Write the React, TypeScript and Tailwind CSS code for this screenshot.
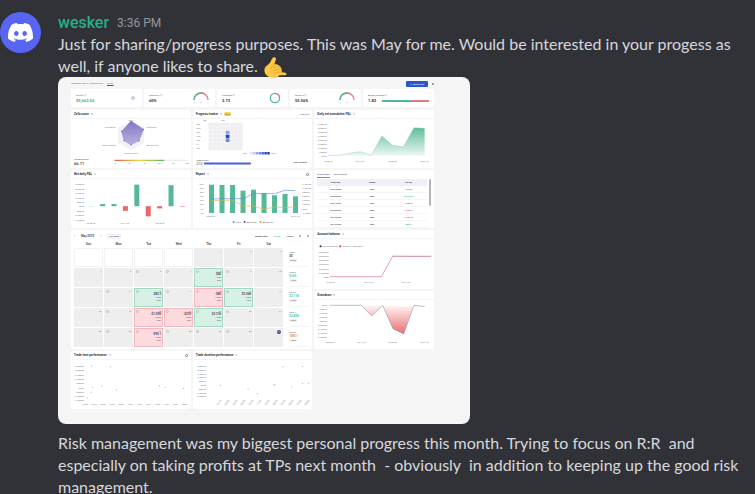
import type { ReactNode } from 'react';
import { SiDiscord } from 'react-icons/si';

type Point = [number, number];

const toPoints = (points: Point[]) => points.map((p) => p.join(',')).join(' ');

const Card = ({
  title,
  extra,
  action,
  children,
}: {
  title: string;
  extra?: ReactNode;
  action?: ReactNode;
  children: ReactNode;
}) => (
  <section className="flex min-w-0 flex-col rounded-[2px] bg-white">
    <header className="flex h-[9px] items-center gap-[2px] border-b border-[#f4f4f6] px-[3px]">
      <h3 className="text-[3px] leading-none font-bold text-[#33333d]">{title}</h3>
      <span className="size-[2px] rounded-full bg-[#cfcfd5]"></span>
      {extra}
      <div className="ml-auto flex items-center">{action}</div>
    </header>
    {children}
  </section>
);

const Chart = ({ children }: { children: ReactNode }) => (
  <svg viewBox="0 0 119 49" className="block h-[49px] w-full" fontSize="2" fill="#77777f">
    {children}
  </svg>
);

const YLabels = ({ labels, x, y, step }: { labels: string[]; x: number; y: number; step: number }) => (
  <g textAnchor="end">
    {labels.map((label, i) => (
      <text key={i} x={x} y={y + i * step + 1}>
        {label}
      </text>
    ))}
  </g>
);

const XLabels = ({ labels, xs, y }: { labels: string[]; xs: number[]; y: number }) => (
  <g textAnchor="middle">
    {labels.map((label, i) => (
      <text key={i} x={xs[i]} y={y + 1}>
        {label}
      </text>
    ))}
  </g>
);

const Gauge = ({ split }: { split: number }) => (
  <svg viewBox="0 0 18 14" className="h-[14px] w-[18px]" fill="none" strokeWidth="1.3">
    <path d="M2 9a7 7 0 0 1 14 0" pathLength="100" stroke="#e8777d" />
    <path d="M2 9a7 7 0 0 1 14 0" pathLength="100" strokeDasharray={`${split} 100`} stroke="#4dba92" />
    <g fontSize="2" textAnchor="middle">
      <text x="2" y="12" fill="#4dba92">6</text>
      <text x="9" y="12" fill="#7777aa">0</text>
      <text x="16" y="12" fill="#e8777d">4</text>
    </g>
  </svg>
);

const stats = [
  {
    label: 'Net P&L',
    value: '$5,662.04',
    color: 'text-[#36b184]',
    visual: <span className="mr-[2px] size-[4px] rounded-full border border-[#c4c0f2] bg-[#dddbfa]"></span>,
  },
  { label: 'Trade win %', value: '60%', color: 'text-[#33333d]', visual: <Gauge split={62} /> },
  {
    label: 'Profit factor',
    value: '2.73',
    color: 'text-[#33333d]',
    visual: (
      <svg viewBox="0 0 12 12" className="mr-[2px] size-[12px]" fill="none" strokeWidth="1.3">
        <circle cx="6" cy="6" r="4.6" stroke="#4dba92" />
        <path d="M6 1.4a4.6 4.6 0 0 1 4.5 3.8" stroke="#e8777d" />
      </svg>
    ),
  },
  { label: 'Day win %', value: '55.56%', color: 'text-[#33333d]', visual: <Gauge split={56} /> },
];

const dayLabels = ['Sun', 'Mon', 'Tue', 'Wed', 'Thu', 'Fri', 'Sat'];
const moneyLabels = ['$2,500.00', '$2,000.00', '$1,500.00', '$1,000.00', '$500.00', '$0.00', '-$500.00', '-$1,000.00', '-$1,500.00'];

const ScoreChart = () => (
  <Chart>
    <defs>
      <linearGradient id="radar" x1="0" y1="0" x2="0" y2="1">
        <stop offset="0" stopColor="#8375c4" />
        <stop offset="1" stopColor="#b9b2df" />
      </linearGradient>
      <linearGradient id="score">
        <stop offset="0" stopColor="#e9604e" />
        <stop offset="0.5" stopColor="#f0cf48" />
        <stop offset="1" stopColor="#52b869" />
      </linearGradient>
    </defs>
    <polygon points="59.7,2 72.7,9 72.7,24 59.7,31 46.7,24 46.7,9" fill="#f1f1f6" />
    <polygon points="59.7,2 72.3,10.3 67.7,21.7 59.7,25.7 52.7,21.7 50.3,12.3" fill="url(#radar)" stroke="#7767bd" strokeWidth="0.3" />
    {[[59.7, 2], [72.3, 10.3], [67.7, 21.7], [59.7, 25.7], [52.7, 21.7], [50.3, 12.3]].map(([x, y], i) => (
      <circle key={i} cx={x} cy={y} r="0.6" fill="#6253a8" />
    ))}
    <g textAnchor="middle">
      <text x="59.7" y="1.6">Win %</text>
      <text x="80" y="9.3">Profit factor</text>
      <text x="81" y="27.3">Avg win/loss</text>
      <text x="59.7" y="35.3">Recovery factor</text>
      <text x="37.7" y="27.3">Max drawdown</text>
      <text x="39" y="9.3">Consistency</text>
    </g>
    <text x="2.7" y="41" fill="#33333d">Your Zella Score</text>
    <text x="2.7" y="46" fontSize="4" fontWeight="600" fill="#44444e">66.11</text>
    <rect x="43.3" y="40.8" width="73" height="1.2" fill="#ececf0" />
    <rect x="43.3" y="40.8" width="49.5" height="1.2" fill="url(#score)" />
    <XLabels labels={['0', '20', '40', '60', '80', '100']} xs={[43.7, 58, 73, 87.5, 102, 115.5]} y={44} />
  </Chart>
);

const heat: Record<number, string> = { 2: '#8ea5ea', 3: '#2349c9', 4: '#6d8be3' };
const legendBlues = ['#dfe6fb', '#b9c8f5', '#8ea5ea', '#6d8be3', '#4468d8', '#2349c9', '#1c3ca8'];

const ProgressChart = () => (
  <Chart>
    <XLabels labels={['Apr', 'May']} xs={[11.7, 29.7]} y={1} />
    <rect x="15" y="3.6" width="34.6" height="27.7" rx="1" fill="#f7f7f9" />
    {dayLabels.map((day, row) => (
      <g key={day}>
        <text x="3.2" y={6.2 + row * 4}>{day}</text>
        {Array.from({ length: 8 }, (_, col) => (
          <rect
            key={col}
            x={15.4 + col * 4.25}
            y={4 + row * 3.9}
            width="3.8"
            height="3.5"
            rx="0.6"
            fill={col === 4 && heat[row] ? heat[row] : '#efeff2'}
          />
        ))}
      </g>
    ))}
    <text x="49.5" y="35">Less</text>
    {legendBlues.map((blue, i) => (
      <rect key={blue} x={56.5 + i * 2.9} y="33" width="2.5" height="2.5" rx="0.5" fill={blue} />
    ))}
    <text x="78" y="35">More</text>
    <text x="3" y="42" fill="#33333d">Today's score</text>
    <text x="3" y="46" fontSize="4" fill="#44444e">2/3</text>
    <rect x="10.5" y="43.6" width="47.2" height="2" rx="1" fill="#4463d4" />
    <text x="107" y="44" textAnchor="middle" fontWeight="600" fill="#33333d">Daily checklist</text>
  </Chart>
);

const cumulative: Point[] = [[13.6, 36.3], [24.6, 36.3], [34.6, 34.3], [45.6, 32.7], [57, 36.3], [67.6, 17], [78.3, 26.3], [89, 28], [99.6, 8.7], [110.3, 9.3]];

const CumulativeChart = () => (
  <Chart>
    <defs>
      <linearGradient id="profit" x1="0" y1="0" x2="0" y2="1">
        <stop offset="0" stopColor="#5fbd9a" />
        <stop offset="1" stopColor="#eaf7f2" />
      </linearGradient>
    </defs>
    <YLabels labels={['$7,000.00', '$6,000.00', '$5,000.00', '$4,000.00', '$3,000.00', '$2,000.00', '$1,000.00', '$500.00', '$0.00']} x={12.3} y={5} step={4} />
    <polygon points={`${toPoints(cumulative)} 110.3,36.5 13.6,36.5`} fill="url(#profit)" />
    <polyline points={toPoints(cumulative)} fill="none" stroke="#8cc5af" strokeWidth="0.4" />
    <XLabels labels={['05/08/25', '05/14/25', '05/20/25', '05/27/25']} xs={[14, 45.7, 78.3, 110.3]} y={41.7} />
  </Chart>
);

const dailyBars = [0.2, 2.2, 2.2, -4.6, 21.6, -10.2, -2.2, 21, -0.5];

const DailyChart = () => (
  <Chart>
    <YLabels labels={moneyLabels} x={12.7} y={5.3} step={4.4} />
    {dailyBars.map((value, i) => (
      <rect
        key={i}
        x={17.4 + i * 11.4}
        y={value > 0 ? 27.2 - value : 27.2}
        width="5"
        height={Math.abs(value)}
        fill={value > 0 ? '#53ba95' : '#e5696b'}
      />
    ))}
    <XLabels labels={['05/08/25', '05/14/25', '05/20/25']} xs={[19.7, 53.7, 88.7]} y={44} />
  </Chart>
);

const reportTops = [5.7, 6, 6, 11.7, 10.7, 14, 16.3, 15, 17.3];
const avgWin: Point[] = [[18.4, 20], [28.3, 19.7], [39, 19.7], [50, 19.7], [60, 14.7], [70.7, 14.7], [81, 14.7], [91.7, 11.3], [102, 11.7]];
const avgLoss: Point[] = [[18.4, 21.7], [28.3, 21.3], [39, 21.3], [50, 27], [60, 27], [70.7, 30.3], [81, 28], [91.7, 28.7], [102, 27.7]];

const ReportChart = () => (
  <Chart>
    <YLabels labels={['100%', '90%', '80%', '70%', '60%', '50%', '40%', '0%']} x={10.4} y={4.7} step={4.15} />
    {reportTops.map((top, i) => (
      <rect key={i} x={15.7 + i * 10.5} y={top} width="5" height={34 - top} fill="#53ba95" />
    ))}
    <polyline points={toPoints(avgWin)} fill="none" stroke="#5685d6" strokeWidth="0.6" />
    <polyline points={toPoints(avgLoss)} fill="none" stroke="#e5ae4b" strokeWidth="0.6" />
    {['$1,200.00', '$1,000.00', '$800.00', '$600.00', '$400.00', '$200.00', '$0.00', '-$1,000.0'].map((label, i) => (
      <text key={label} x="109" y={5.7 + i * 4.15}>{label}</text>
    ))}
    <XLabels labels={['05/08/25', '05/27/25']} xs={[17.4, 102]} y={37.3} />
    <g fill="#44444e">
      <circle cx="40.3" cy="43" r="1" fill="#3fb28a" />
      <text x="42.3" y="44">Win %</text>
      <circle cx="51.3" cy="43" r="1" fill="#3856c5" />
      <text x="53.3" y="44">Avg win ($)</text>
      <circle cx="67.3" cy="43" r="1" fill="#e0a02e" />
      <text x="69.3" y="44">Avg loss ($)</text>
    </g>
  </Chart>
);

const BalanceChart = () => (
  <Chart>
    <rect x="5.3" y="6.3" width="2" height="2" rx="0.6" fill="#3c3897" />
    <text x="8.5" y="8">Account Balance</text>
    <rect x="25" y="6.3" width="2" height="2" rx="0.6" fill="#dc3c6b" />
    <text x="28.2" y="8">Deposits / Withdrawals</text>
    <YLabels labels={['$60,000.00', '$50,000.00', '$40,000.00', '$30,000.00', '$20,000.00', '$10,000.00', '$0.00']} x={14.3} y={13.3} step={4.05} />
    <polyline points="15.3,37.7 67,37.7 78.3,17.3 117,17.7" fill="none" stroke="#d97990" strokeWidth="0.7" />
    <polyline points="78.3,17.1 117,17" fill="none" stroke="#8a6f98" strokeWidth="0.3" />
    <XLabels labels={['04/30/25', '05/14/25', '05/21/25']} xs={[16, 54, 91.7]} y={42.7} />
  </Chart>
);

const drawdown: Point[] = [[15.6, 5.3], [47, 5.3], [57.3, 15.8], [68.3, 5.3], [78.6, 28.7], [89.3, 34], [99.6, 5.3], [110.3, 6.5]];

const DrawdownChart = () => (
  <Chart>
    <defs>
      <linearGradient id="loss" gradientUnits="userSpaceOnUse" x1="0" y1="6" x2="0" y2="34">
        <stop offset="0" stopColor="#fef1f1" />
        <stop offset="1" stopColor="#e96f6f" />
      </linearGradient>
    </defs>
    <YLabels labels={['$0.00', '-$200.00', '-$400.00', '-$600.00', '-$800.00', '-$1,000.00', '-$1,200.00', '-$1,400.00', '-$1,800.00']} x={12.5} y={5.3} step={4} />
    <polygon points={toPoints(drawdown)} fill="url(#loss)" />
    <polyline points={toPoints(drawdown)} fill="none" stroke="#9a8fae" strokeWidth="0.6" />
    <XLabels labels={['05/08/25', '05/14/25', '05/20/25', '05/27/25']} xs={[15.6, 47, 78.3, 110.3]} y={42.3} />
  </Chart>
);

const timeDots: Point[] = [[20.3, 6], [39, 6.7], [21.3, 27.3], [30.3, 26], [20, 32.3], [16.3, 37.7], [45.3, 30], [88, 25.7], [94, 27.3], [112, 28.3]];
const durationDots: Point[] = [[27.3, 25.3], [54.7, 29], [64, 33.7], [80.5, 24.7], [81.7, 24.7], [89.7, 6.7], [98.3, 26.7], [109, 6.3], [109, 23.3], [115.3, 23.3]];

const Dots = ({ points }: { points: Point[] }) => (
  <>
    {points.map(([x, y], i) => (
      <circle key={i} cx={x} cy={y} r="0.5" fill={i % 5 === 3 ? '#53ba95' : '#92929a'} />
    ))}
  </>
);

const TimeChart = () => (
  <Chart>
    <YLabels labels={moneyLabels} x={12.5} y={6} step={4.3} />
    <Dots points={timeDots} />
    <XLabels
      labels={['02:00', '03:30', '05:00', '07:00', '08:30', '10:00', '12:00', '13:30', '15:00', '17:00', '18:30', '20:00']}
      xs={[13.7, 22.7, 31.7, 40.7, 49.7, 58.7, 67.7, 76.7, 85.7, 94.7, 103.7, 112.7]}
      y={44.3}
    />
  </Chart>
);

const DurationChart = () => (
  <Chart>
    <YLabels labels={moneyLabels} x={12.7} y={6} step={3.8} />
    <Dots points={durationDots} />
    {['1m:14s', '2m:05s', '3m:20s', '5m:00s', '7m:30s', '11m:0s', '16m:0s', '25m:0s', '37m:0s', '55m:0s', '1h:22m', '2h:00m'].map((label, i) => (
      <text key={label} textAnchor="middle" transform={`translate(${26 + i * 8} 43) rotate(-50)`}>
        {label}
      </text>
    ))}
  </Chart>
);

const trades = [
  { date: '05/27/2025', pnl: '-$90.00', win: false },
  { date: '05/22/2025', pnl: '$2,210.39', win: true },
  { date: '05/21/2025', pnl: '-$208.89', win: false },
  { date: '05/20/2025', pnl: '-$1,089.51', win: false },
  { date: '05/15/2025', pnl: '$1,056.35', win: true },
  { date: '05/13/2025', pnl: '$80.21', win: true },
];

const RecentTrades = () => (
  <section className="flex min-w-0 flex-col overflow-hidden rounded-[2px] bg-white px-[3px]">
    <nav className="flex h-[11px] items-center gap-[4px] text-[2px] leading-[6px] font-medium">
      <a href="#recent" className="border-b border-[#8c85c4] text-[#5148a8]">Recent trades</a>
      <a href="#open" className="text-[#55555f]">Open positions</a>
    </nav>
    <div className="flex gap-[2px]">
      <table className="w-full table-fixed text-center text-[2px] leading-[6px] font-medium text-[#33333d]">
        <thead>
          <tr className="h-[7px] bg-[#f0f0f7] text-[2px] font-bold">
            <th>Close date</th>
            <th>Symbol</th>
            <th>Net P&L</th>
          </tr>
        </thead>
        <tbody>
          {trades.map((trade) => (
            <tr key={trade.date} className="h-[7px] border-b border-[#f6f6f8]">
              <td>{trade.date}</td>
              <td>MNQ</td>
              <td className={trade.win ? 'text-[#18a06f]' : 'text-[#d93c47]'}>{trade.pnl}</td>
            </tr>
          ))}
        </tbody>
      </table>
      <div className="h-[27px] w-[2px] shrink-0 rounded-full bg-[#b4b4b8]"></div>
    </div>
  </section>
);

const results: Record<number, { pnl: string; win: boolean }> = {
  8: { pnl: '$80', win: true },
  13: { pnl: '$80.2', win: true },
  15: { pnl: '-$80', win: false },
  16: { pnl: '$2.06K', win: true },
  20: { pnl: '-$1.09K', win: false },
  21: { pnl: '-$209', win: false },
  22: { pnl: '$2.21K', win: true },
  27: { pnl: '-$90.1', win: false },
};

const weeks = [
  { pnl: '$0', color: 'text-[#33333d]' },
  { pnl: '$160', color: 'text-[#36b184]' },
  { pnl: '$2.11K', color: 'text-[#36b184]' },
  { pnl: '$2.83K', color: 'text-[#36b184]' },
  { pnl: '-$90.1', color: 'text-[#e0565f]' },
];

const dayStyle = (day: number) => {
  if (day < 1) return 'border-[#f3f3f5] bg-white';
  const result = results[day];
  if (!result) return 'border-[#eeeeee] bg-[#eeeeee]';
  return result.win ? 'border-[#a3d9c3] bg-[#d8f1e6]' : 'border-[#f2b8bd] bg-[#fcdadd]';
};

const daysWithNote = [6, 7, 8, 9, 12, 13, 14, 15, 16, 19, 20, 21, 22, 23, 26, 27, 28, 29, 30];

const CalendarCard = () => (
  <section className="col-span-2 row-span-2 flex min-w-0 flex-col rounded-[2px] bg-white px-[3px] text-[2px] leading-[3px] text-[#55555f]">
    <header className="flex h-[12px] items-center gap-[6px] text-[3px] font-medium text-[#33333d]">
      <button type="button">‹</button>
      <span>May 2025</span>
      <button type="button">›</button>
      <button type="button" className="rounded-[1px] border border-[#eeeef1] px-px text-[2px]">This month</button>
      <span className="ml-auto text-[2px] font-bold">Monthly stats:</span>
      <span className="text-[2px] text-[#36b184]">$5.66K</span>
      <span className="text-[2px]">10 days</span>
      <span className="size-[2px] rounded-full bg-[#a8a8ae]"></span>
      <span className="size-[2px] rounded-full bg-[#a8a8ae]"></span>
    </header>
    <div className="flex">
      <div className="grid flex-1 grid-cols-7 gap-x-px text-center text-[3px] font-medium text-[#33333d]">
        {dayLabels.map((day) => (
          <div key={day} className="h-[6px] pt-px">{day}</div>
        ))}
      </div>
      <div className="w-[26px]"></div>
    </div>
    <div className="flex gap-[6px]">
      <div className="grid flex-1 grid-cols-7 gap-px">
        {Array.from({ length: 35 }, (_, i) => i - 3).map((day) => (
          <div key={day} className={`flex h-[19px] justify-between border p-px ${dayStyle(day)}`}>
            <span className={`size-[3px] rounded-full ${daysWithNote.includes(day) ? 'border border-[#bbbbc0]' : ''}`}></span>
            <div className="text-right">
              {day === 31 ? (
                <div className="size-[4px] rounded-full bg-[#4b4791] text-center text-white">31</div>
              ) : (
                <div>{day > 0 ? day : ''}</div>
              )}
              {results[day] && (
                <>
                  <div className="text-[3px] font-medium text-[#33333d]">{results[day].pnl}</div>
                  <div>1 trade</div>
                  <div>100%</div>
                </>
              )}
            </div>
          </div>
        ))}
      </div>
      <div className="grid w-[20px] auto-rows-[19px] gap-px">
        {weeks.map((week, i) => (
          <div key={i} className="flex flex-col gap-px border-b border-[#f5f5f7] pt-[3px]">
            <span>Week {i + 1}</span>
            <span className={`text-[3px] font-medium ${week.color}`}>{week.pnl}</span>
            <span className="w-fit rounded-[1px] bg-[#f0f0f5] px-px">{i} days</span>
          </div>
        ))}
      </div>
    </div>
  </section>
);

const Dashboard = () => (
  <div className="w-full max-w-[412px] rounded-[8px] bg-[#f5f5f6] pr-[36px] pb-[15px] pl-[13px] font-[Roboto,sans-serif]">
    <div className="flex h-[12px] items-center gap-[4px] text-[2px] leading-none text-[#55555f]">
      <span>Last import: May 31, 2025 03:30 PM</span>
      <a href="#resync" className="text-[#5148a8] underline">Resync</a>
      <button type="button" className="mt-[2px] ml-auto h-[6px] rounded-[1px] bg-[#2d55cc] px-[4px] text-[2px] font-semibold text-white">
        ✦ Start my day
      </button>
      <span className="mt-[2px] size-[2px] rounded-full bg-[#7482b8]"></span>
    </div>
    <div className="grid grid-cols-5 gap-[2px]">
      {stats.map((stat) => (
        <div key={stat.label} className="flex h-[18px] items-center justify-between rounded-[2px] bg-white px-[5px]">
          <div className="flex flex-col gap-[2px]">
            <span className="text-[2px] leading-[3px] text-[#44444e]">{stat.label} ⓘ</span>
            <span className={`text-[4px] leading-[4px] font-bold ${stat.color}`}>{stat.value}</span>
          </div>
          {stat.visual}
        </div>
      ))}
      <div className="flex h-[18px] flex-col justify-center gap-[2px] rounded-[2px] bg-white px-[5px]">
        <span className="text-[2px] leading-[3px] text-[#44444e]">Avg win/loss trade ⓘ</span>
        <div className="flex items-center gap-[6px]">
          <span className="text-[4px] leading-[4px] font-bold text-[#33333d]">1.82</span>
          <div className="flex h-[2px] flex-1">
            <span className="flex-[5] bg-[#4dba92]"></span>
            <span className="flex-[3] bg-[#e8777d]"></span>
          </div>
        </div>
      </div>
    </div>
    <div className="mt-[3px] grid grid-cols-3 grid-rows-[58px_58px_59px_58px_58px] gap-[2px]">
      <Card title="Zella score">
        <ScoreChart />
      </Card>
      <Card
        title="Progress tracker"
        extra={<span className="rounded-full bg-[#f6cf52] px-px text-[2px] leading-[4px] text-[#8a6a10]">BETA</span>}
        action={<a href="#progress" className="text-[2px] text-[#5148a8]">View more</a>}
      >
        <ProgressChart />
      </Card>
      <Card title="Daily net cumulative P&L">
        <CumulativeChart />
      </Card>
      <Card title="Net daily P&L">
        <DailyChart />
      </Card>
      <Card title="Report" action={<span className="size-[3px] rounded-[1px] border border-[#a0a0a6]"></span>}>
        <ReportChart />
      </Card>
      <RecentTrades />
      <CalendarCard />
      <Card title="Account balance">
        <BalanceChart />
      </Card>
      <Card title="Drawdown">
        <DrawdownChart />
      </Card>
      <Card title="Trade time performance" action={<span className="size-[3px] rounded-[1px] border border-[#a0a0a6]"></span>}>
        <TimeChart />
      </Card>
      <Card title="Trade duration performance">
        <DurationChart />
      </Card>
    </div>
  </div>
);

const CallMeHand = () => (
  <svg viewBox="0 0 24 24" className="-my-1 ml-px inline-block size-6 align-middle" role="img" aria-label="call me hand">
    <path
      d="M10.8 1.2c1.8-.4 2.5 1 2 2.5l-1.5 4.7c2-.5 4.2.2 4.9 1.3.9.3 1.7 1.2 1.5 2.1.9.6 1.3 1.5.8 2.4.5.6.6 1.3.3 2l3.5.5c1.7.3 1.5 2.6-.3 2.6l-5.6-.1c-1.8 2.6-5.5 3.3-9.3 2.1C3 20 .7 16.6 1.6 12.8c.5-2.2 2.5-3.5 4.5-5.1C8.2 6 8.6 1.7 10.8 1.2z"
      fill="#fcc745"
    />
    <path
      d="M10.6 9.3c-1.5.9-2.2 2-2.3 3.6M10.5 12.3c2.2-1.8 4.4-2 5.9-1.5M10.6 15c2-1.6 4.9-2.2 6.8-1.7M11.3 17.3c2-1.3 4.3-1.6 6.7-1"
      fill="none"
      stroke="#e39a27"
      strokeWidth="0.7"
      strokeLinecap="round"
    />
  </svg>
);

const App = () => {
  return (
    <main className="h-screen overflow-hidden bg-[#313238] pt-3 font-[Lato,sans-serif] text-[#d6d8dc]">
      <article className="flex gap-[17px]">
        <div className="flex size-[41px] shrink-0 items-center justify-center rounded-full bg-[#5865f2] text-white">
          <SiDiscord size={25} />
        </div>
        <div className="min-w-0 flex-1">
          <header className="flex h-[21px] items-center gap-2">
            <a href="#wesker" className="font-[Roboto,sans-serif] text-[16px] leading-5 font-medium text-[#21b286]">wesker</a>
            <time className="font-[Roboto,sans-serif] text-[12px] leading-5 text-[#94979f]">3:36 PM</time>
          </header>
          <p className="max-w-[690px] text-[16px] leading-[22px] whitespace-pre-wrap">
            Just for sharing/progress purposes. This was May for me. Would be interested in your progess as well, if anyone likes to share. <CallMeHand />
          </p>
          <Dashboard />
          <p className="mt-2 max-w-[690px] text-[16px] leading-[22px] whitespace-pre-wrap">
            {'Risk management was my biggest personal progress this month. Trying to focus on R:R  and especially on taking profits at TPs next month  - obviously  in addition to keeping up the good risk management.'}
          </p>
        </div>
      </article>
    </main>
  );
};

export default App;
